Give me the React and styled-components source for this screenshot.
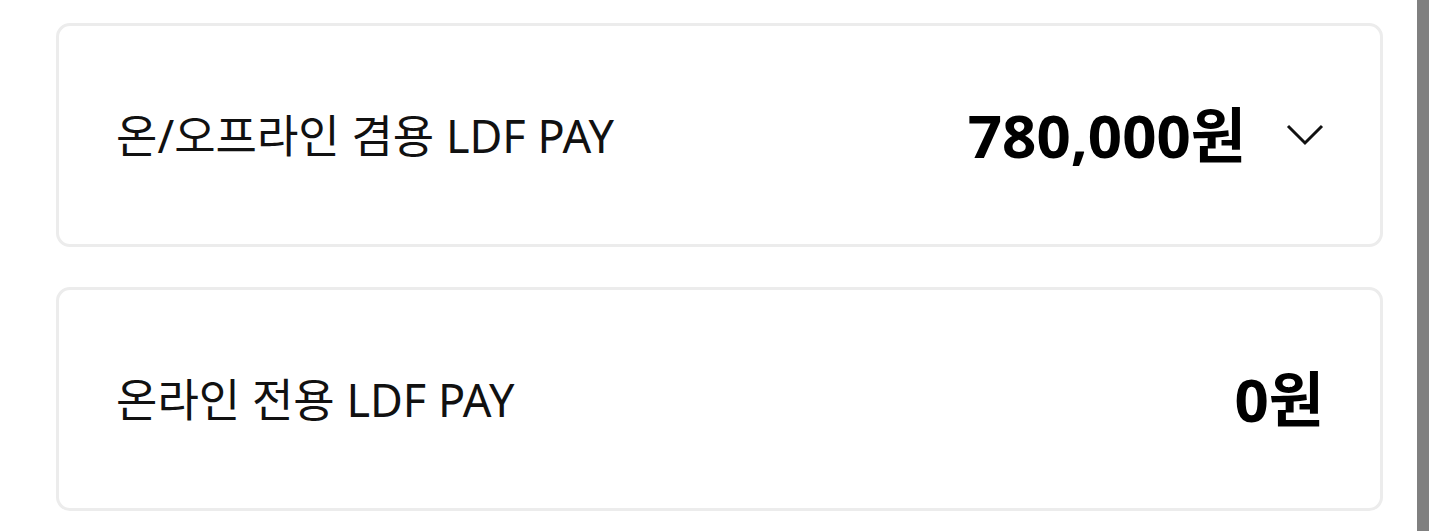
import React from 'react';
import styled, { createGlobalStyle } from 'styled-components';

const GlobalStyle = createGlobalStyle`
  html, body {
    margin: 0;
    padding: 0;
    background: #fff;
    font-family: "Noto Sans", "Noto Sans CJK KR", sans-serif;
    color: #111;
  }
`;

const Page = styled.div`
  display: flex;
  width: 1440px;
  height: 531px;
  overflow: hidden;
`;

const Main = styled.div`
  flex: 1;
  display: flex;
  flex-direction: column;
  gap: 40px;
  padding: 23px 34px 0 56px;
`;

const ScrollBar = styled.div`
  width: 12px;
  margin-right: 11px;
  background: #808080;
`;

const Card = styled.div`
  height: 224px;
  box-sizing: border-box;
  border: 3px solid #ececec;
  border-radius: 14px;
  display: flex;
  align-items: center;
  justify-content: space-between;
  padding: 0 56px 0 57px;
`;

const Label = styled.span`
  font-size: 45px;
  font-weight: 400;
  line-height: 1;
`;

const Amount = styled.div`
  display: flex;
  align-items: center;
  gap: 40px;
  font-size: 60px;
  font-weight: 700;
  line-height: 1;
  color: #000;
`;

const Chevron = () => (
  <svg width="38" height="24" viewBox="0 0 38 24" fill="none">
    <path d="M2 3 L19 20 L36 3" stroke="#111" strokeWidth="3" />
  </svg>
);

const rows = [
  { label: '온/오프라인 겸용 LDF PAY', value: '780,000원', open: true },
  { label: '온라인 전용 LDF PAY', value: '0원' },
];

export default function App() {
  return (
    <Page>
      <GlobalStyle />
      <Main>
        {rows.map((r) => (
          <Card key={r.label}>
            <Label>{r.label}</Label>
            <Amount>
              {r.value}
              {r.open && <Chevron />}
            </Amount>
          </Card>
        ))}
      </Main>
      <ScrollBar />
    </Page>
  );
}
